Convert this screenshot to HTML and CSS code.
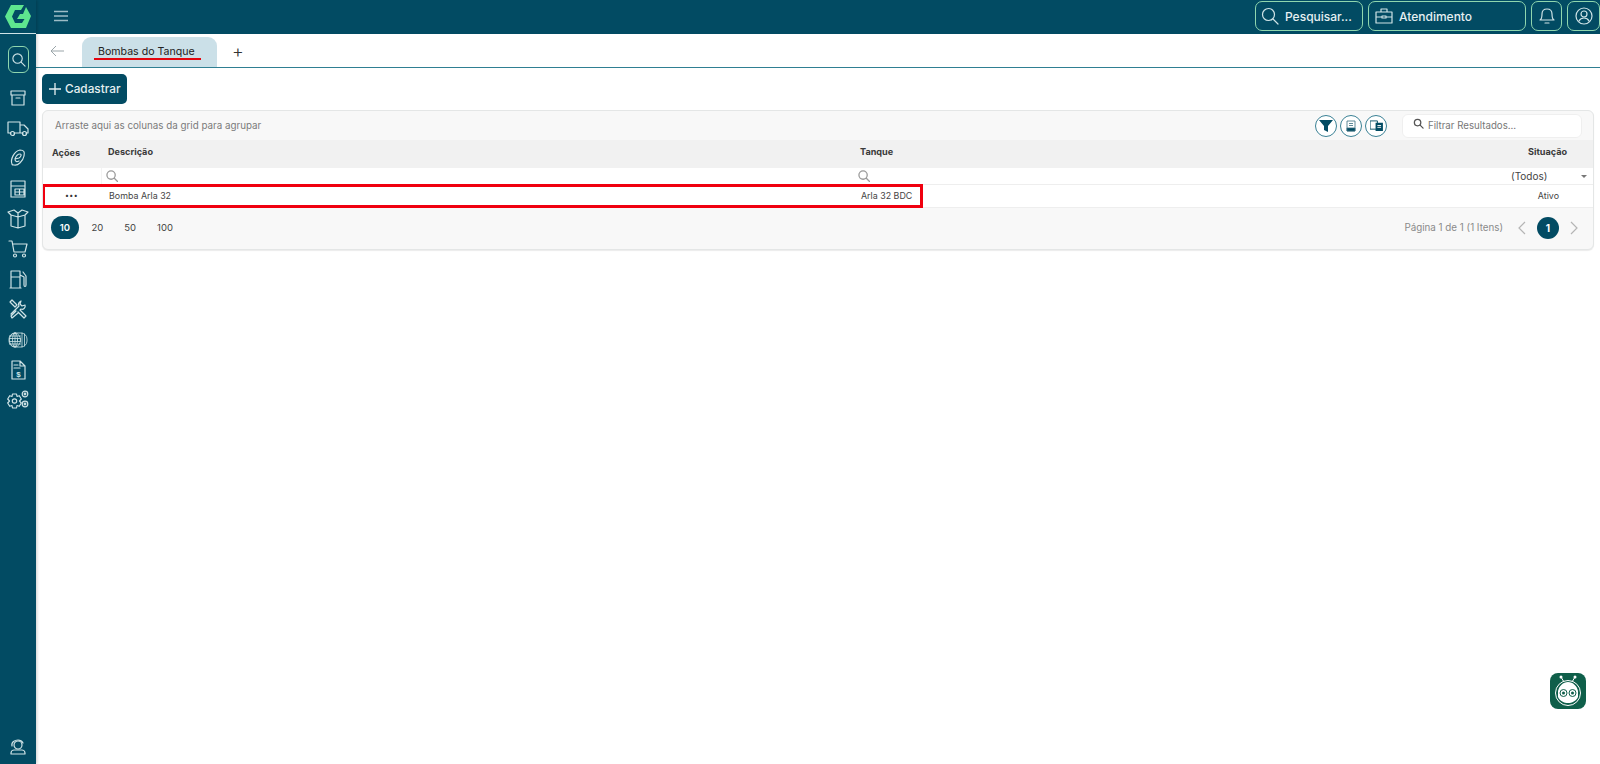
FILE: index.html
```html
<!DOCTYPE html>
<html lang="pt-BR">
<head>
<meta charset="utf-8">
<title>Bombas do Tanque</title>
<link rel="stylesheet" href="styles.css">
</head>
<body>
<div class="app">
  <aside class="sidebar">
    <div class="logo">
      <svg viewBox="5 5 26 23" width="26" height="23"><path d="M11 5 H24 L21 10 H15 L12 16.500 L15 23 H22 L24.500 19 H17 L20 14 H23 L26 7 L31 16 L26 28 H11 L5 16.500 Z" fill="#5ee58f"/></svg>
    </div>
    <div class="side-search">
      <svg viewBox="0 0 16 16" width="15" height="15" class="ic"><circle cx="7" cy="7" r="5"/><path d="M11 11l4 4"/></svg>
    </div>
    <nav class="side-nav">
      <span class="side-item"><svg viewBox="0 0 18 18" width="18" height="18" class="ic"><path d="M2 2h14v4H2zM3 6v10h12V6M7 9h4"/></svg></span>
      <span class="side-item"><svg viewBox="0 0 22 18" width="22" height="18" class="ic"><path d="M1 3h12v11H7M4 14H1V3M13 6h4l4 4v4h-2M16 14h-3"/><circle cx="5.500" cy="14.500" r="2"/><circle cx="17.500" cy="14.500" r="2"/></svg></span>
      <span class="side-item"><svg viewBox="0 0 18 20" width="18" height="20" class="ic"><path d="M3 16c-2-4 2-13 8-14 4 0 5 2 4 6-1 5-6 10-10 9-1 0-2 0-2-1z"/><path d="M6 11c1-3 3-5 5-5 2 0 1 3-1 4l-4 1c0 3 2 3 4 2"/></svg></span>
      <span class="side-item"><svg viewBox="0 0 18 18" width="18" height="18" class="ic"><path d="M2 1h14v16H2zM2 6h14M6 9h9v6H6zM10.500 9v6M6 12h9"/></svg></span>
      <span class="side-item"><svg viewBox="0 0 22 20" width="22" height="20" class="ic"><path d="M4 6v11l7 2 7-2V6M11 8v11M4 6L1 3l6-2 4 3 4-3 6 2-3 3-7 2zM11 4v4"/></svg></span>
      <span class="side-item"><svg viewBox="0 0 20 18" width="20" height="18" class="ic"><path d="M1 1h3l2 11h11l2-8H5"/><circle cx="7" cy="15.500" r="1.500"/><circle cx="16" cy="15.500" r="1.500"/></svg></span>
      <span class="side-item"><svg viewBox="0 0 18 20" width="18" height="20" class="ic"><path d="M2 19V2h9v17M1 19h11M2 8h9M11 6l4 2v8c0 2 2 2 2 0V7l-3-4"/></svg></span>
      <span class="side-item"><svg viewBox="0 0 20 20" width="20" height="20" class="ic"><path d="M2 3l2-2 5 5-2 2zM8 12l-5 5 1 2 6-5M13 2c-2 1-3 3-2 5L3 15M13 2l-1 3 2 2 3-1c1 3-2 5-4 4l-1 1 6 6-2 2-6-6"/></svg></span>
      <span class="side-item"><svg viewBox="0 0 20 16" width="20" height="16" class="ic thin"><rect x="1" y="1" width="18" height="14" rx="6"/><ellipse cx="7" cy="8" rx="5.500" ry="7"/><ellipse cx="7" cy="8" rx="2.500" ry="7"/><path d="M1.500 4h11M1.500 6.500h11M1.500 9.500h11M1.500 12h11M7 1v14M14 1v14M16.500 2v12"/></svg></span>
      <span class="side-item"><svg viewBox="0 0 16 20" width="16" height="20" class="ic"><path d="M2 1h8l5 5v13H2zM10 1v5h5M4 5h4M4 8h6"/><text x="8.500" y="17" class="dollar">$</text></svg></span>
      <span class="side-item"><svg viewBox="0 0 22 20" width="22" height="20" class="ic"><circle cx="7.500" cy="11" r="2.200"/><path d="M5.500 4h4l.5 2.500 2.300-.8 2 3.300-1.800 2 1.800 2-2 3.300-2.300-.8-.5 2.500h-4L5 15.500l-2.300.8-2-3.300 1.800-2-1.800-2 2-3.300 2.300.8z"/><circle cx="18" cy="4" r="2.800"/><circle cx="18" cy="14" r="2.800"/><circle cx="18" cy="4" r=".8"/><circle cx="18" cy="14" r=".8"/></svg></span>
    </nav>
    <div class="side-foot">
      <svg viewBox="0 0 18 16" width="18" height="16" class="ic"><circle cx="9" cy="6" r="4"/><path d="M3 7c-1-4 3-6 6-6 2 0 4 1 5 3M2 15v-1c0-2 2-3 3-3h8c1 0 3 1 3 3v1z"/></svg>
    </div>
  </aside>

  <div class="main">
    <header class="topbar">
      <svg viewBox="0 0 14 12" width="14" height="12" class="menu"><path d="M0 1.500h14M0 6h14M0 10.500h14"/></svg>
      <div class="top-actions">
        <button class="top-btn search-btn">
          <svg viewBox="0 0 18 18" width="18" height="18" class="ic"><circle cx="7.500" cy="7.500" r="6"/><path d="M12 12l5 5"/></svg>
          Pesquisar...
        </button>
        <button class="top-btn service-btn">
          <svg viewBox="0 0 18 16" width="18" height="16" class="ic"><path d="M1 4h16v11H1zM6 4V1h6v3M1 9h6M11 9h6M7 8h4v2H7z"/></svg>
          Atendimento
        </button>
        <button class="top-btn icon-btn">
          <svg viewBox="0 0 16 18" width="16" height="18" class="ic"><path d="M1 13c2-1 2-3 2-6 0-3 2-5 5-5s5 2 5 5c0 3 0 5 2 6zM6 16h4"/></svg>
        </button>
        <button class="top-btn icon-btn user-btn">
          <svg viewBox="0 0 18 18" width="18" height="18" class="ic"><circle cx="9" cy="9" r="8"/><circle cx="9" cy="7" r="3"/><path d="M4 14c1-2 3-3 5-3s4 1 5 3"/></svg>
        </button>
      </div>
    </header>

    <div class="tabs">
      <svg viewBox="0 0 14 12" width="14" height="12" class="back"><path d="M14 6H1M6 1L1 6l5 5"/></svg>
      <div class="tab"><span class="tab-label">Bombas do Tanque</span></div>
      <span class="tab-add">+</span>
    </div>

    <div class="content">
      <button class="primary"><svg viewBox="0 0 12 12" width="12" height="12" class="plus"><path d="M6 0v12M0 6h12"/></svg>Cadastrar</button>

      <section class="grid-card">
        <div class="toolbar">
          <span class="group-hint">Arraste aqui as colunas da grid para agrupar</span>
          <div class="tools">
            <span class="tool"><svg viewBox="0 0 14 14" width="14" height="14"><path d="M0 1h14L9 7v6L5 11V7z" fill="#024b63"/></svg></span>
            <span class="tool"><svg viewBox="0 0 12 12" width="12" height="12" class="tool-line"><path d="M2 1h8v10H2zM4 3.500h4M4 5.500h4"/><path d="M2 8h8v3H2z" fill="#024b63"/></svg></span>
            <span class="tool"><svg viewBox="0 0 14 12" width="13" height="11"><path d="M0 1h8v9H0z" fill="none" stroke="#024b63"/><path d="M6 3h8v9H6z" fill="#024b63"/><path d="M8 6h4M8 8h4" stroke="#fff"/></svg></span>
          </div>
          <div class="filter-input">
            <svg viewBox="0 0 12 12" width="11" height="11" class="find dark"><circle cx="5" cy="5" r="3.500"/><path d="M8 8l3 3"/></svg>
            <span>Filtrar Resultados...</span>
          </div>
        </div>

        <div class="row head">
          <span class="c-actions">Ações</span>
          <span class="c-desc">Descrição</span>
          <span class="c-tank">Tanque</span>
          <span class="c-status">Situação</span>
        </div>

        <div class="row filters">
          <span class="c-actions"></span>
          <span class="c-desc"><svg viewBox="0 0 13 13" width="12" height="12" class="find"><circle cx="5.500" cy="5.500" r="4.500"/><path d="M9 9l3.500 3.500"/></svg></span>
          <span class="c-tank"><svg viewBox="0 0 13 13" width="12" height="12" class="find"><circle cx="5.500" cy="5.500" r="4.500"/><path d="M9 9l3.500 3.500"/></svg></span>
          <span class="c-status"><span class="all">(Todos)</span><i class="caret"></i></span>
        </div>

        <div class="row data">
          <span class="c-actions dots">•••</span>
          <span class="c-desc">Bomba Arla 32</span>
          <span class="c-tank">Arla 32 BDC</span>
          <span class="c-status">Ativo</span>
          <i class="highlight"></i>
        </div>

        <div class="pager">
          <div class="sizes">
            <span class="size on">10</span>
            <span class="size">20</span>
            <span class="size">50</span>
            <span class="size">100</span>
          </div>
          <div class="pages">
            <span class="page-info">Página 1 de 1 (1 Itens)</span>
            <svg viewBox="0 0 8 14" width="8" height="14" class="chev"><path d="M7 1L1 7l6 6"/></svg>
            <span class="page-on">1</span>
            <svg viewBox="0 0 8 14" width="8" height="14" class="chev"><path d="M1 1l6 6-6 6"/></svg>
          </div>
        </div>
      </section>
    </div>
  </div>
</div>

<div class="bot">
  <svg viewBox="0 0 36 36" width="36" height="36">
    <path d="M11 4l3 5M25 4l-3 5" stroke="#fff" stroke-width="1"/>
    <circle cx="11" cy="4" r="1.500" fill="#fff"/><circle cx="25" cy="4" r="1.500" fill="#fff"/>
    <circle cx="18" cy="20" r="12.500" fill="none" stroke="#fff" stroke-width="1"/>
    <path d="M8 18c1-5 5-9 10-9s9 4 10 9v6c-2 4-6 6-10 6s-8-2-10-6z" fill="#fff"/>
    <circle cx="13.500" cy="20" r="3.500" fill="none" stroke="#0f5f4a" stroke-width="1"/>
    <circle cx="22.500" cy="20" r="3.500" fill="none" stroke="#0f5f4a" stroke-width="1"/>
    <circle cx="13.500" cy="20" r="1.500" fill="#0f5f4a"/><circle cx="22.500" cy="20" r="1.500" fill="#0f5f4a"/>
  </svg>
</div>
</body>
</html>
```

FILE: styles.css
```css
* { box-sizing: border-box; }
html, body { margin: 0; height: 100%; overflow: hidden; }
body { font-family: Inter, "Liberation Sans", sans-serif; color: #333; background: #fff; }

.app { display: flex; height: 764px; }

.ic { fill: none; stroke: #cfe3e6; stroke-width: 1.200; stroke-linecap: round; stroke-linejoin: round; }
.ic.thin { stroke-width: .8; }
.dollar { font: 700 8px "Liberation Sans", sans-serif; fill: #cfe3e6; stroke: none; text-anchor: middle; }

.sidebar { width: 36px; flex: none; background: #024b63; display: flex; flex-direction: column; align-items: center; box-shadow: 1px 0 3px rgba(0,0,0,.2); z-index: 1; }
.logo { width: 36px; height: 34px; flex: none; display: flex; align-items: center; justify-content: center; border-bottom: 1px solid #cfe3e6; }
.side-search { width: 21px; height: 27px; margin-top: 12px; border: 1px solid #8fd6ae; border-radius: 6px; display: flex; align-items: center; justify-content: center; }
.side-nav { display: flex; flex-direction: column; margin-top: 10px; }
.side-item { height: 30.200px; display: flex; align-items: center; justify-content: center; }
.side-foot { margin-top: auto; height: 25px; }

.main { flex: 1; min-width: 0; display: flex; flex-direction: column; }

.topbar { height: 34px; background: #024b63; display: flex; align-items: center; padding-left: 18px; }
.menu { fill: none; stroke: #9dbcc6; stroke-width: 1.300; margin-top: -2px; }
.top-actions { margin-left: auto; display: flex; gap: 5px; height: 30px; margin-top: -2px; }
.top-btn { height: 30px; background: none; border: 1px solid #8fd6ae; border-radius: 7px; color: #e6f0f2; font: 500 12px Inter, sans-serif; display: flex; align-items: center; gap: 6px; padding: 0 5px; white-space: nowrap; }
.search-btn { width: 108px; }
.service-btn { width: 158px; padding-left: 6px; }
.icon-btn { width: 31px; justify-content: center; padding: 0; }
.user-btn { width: 33px; }

.tabs { height: 34px; flex: none; display: flex; align-items: flex-end; border-bottom: 1px solid #2f7f92; }
.back { fill: none; stroke: #9aa5a9; stroke-width: 1; align-self: center; margin: 0 0 0 14px; }
.tab { width: 135px; height: 30px; margin-left: 18px; background: #cbe0e8; border-radius: 9px 9px 0 0; font-size: 10.600px; color: #222; padding: 8px 0 0 16px; white-space: nowrap; }
.tab-label { position: relative; display: inline-block; line-height: 14px; }
.tab-label::after { content: ""; position: absolute; left: -4px; right: -6px; top: 13px; height: 2px; background: #e4060f; }
.tab-add { font-size: 18px; font-weight: 300; color: #333; align-self: center; margin: 0 0 0 15px; line-height: 18px; position: relative; top: 1px; }

.content { padding: 6px 6px 0 6px; }

.primary { display: flex; align-items: center; width: 85px; height: 30px; border: 0; border-radius: 5px; background: #024b63; color: #e6f0f2; font: 500 11.800px Inter, sans-serif; padding: 0 0 0 7px; white-space: nowrap; }
.plus { fill: none; stroke: #e6f0f2; stroke-width: 1.300; margin-right: 4px; }

.grid-card { margin-top: 6px; height: 140px; border: 1px solid #e4e6e6; border-radius: 6px; background: #f8f8f8; box-shadow: 0 1px 1px rgba(0,0,0,.08); overflow: hidden; }

.toolbar { height: 29px; display: flex; align-items: center; padding-left: 12px; }
.group-hint { font-size: 9.800px; color: #7b7b7b; }
.tools { margin-left: auto; display: flex; gap: 3px; }
.tool { width: 22px; height: 22px; border: 1.200px solid #3a8195; border-radius: 50%; display: flex; align-items: center; justify-content: center; background: #fff; }
.tool-line { fill: none; stroke: #3a6f80; stroke-width: .8; }
.filter-input { width: 180px; height: 24px; margin: 0 11px 0 15px; border: 1px solid #efefef; border-radius: 6px; background: #fff; display: flex; align-items: center; gap: 4px; padding-left: 10px; font-size: 9.700px; color: #777; }
.filter-input .find { margin-top: -4px; }

.find { fill: none; stroke: #9a9a9a; stroke-width: 1.400; stroke-linecap: round; }
.find.dark { stroke: #555; }

.row { display: grid; grid-template-columns: 58px 752px 1fr 90px; align-items: center; font-size: 9.100px; }
.row > span { display: flex; align-items: center; }
.c-actions { padding-left: 9px; }
.c-desc { padding-left: 7px; }
.c-tank { padding-left: 7px; }
.c-status { justify-content: flex-end; padding-right: 26px; }

.head { height: 28px; background: #f1f1f1; font-weight: 700; color: #3a3a3a; }
.head span { position: relative; top: -3px; }
.head .c-actions { top: -2px; }

.filters { height: 16px; background: #fff; }
.filters .c-desc { height: 16px; border-left: 1px solid #f3f3f3; padding-left: 4px; }
.filters .c-tank { padding-left: 5px; }
.filters .c-status { padding-right: 6px; justify-content: space-between; padding-left: 0; }
.all { font-size: 10px; color: #444; margin-left: 8px; }
.caret { width: 0; height: 0; border-left: 3px solid transparent; border-right: 3px solid transparent; border-top: 3px solid #777; }

.data { height: 24px; padding-bottom: 1px; background: #fff; position: relative; color: #444; font-size: 8.900px; border-top: 1px solid #eee; border-bottom: 1px solid #eee; }
.data .c-desc { padding-left: 8px; }
.data .c-tank { padding-left: 8px; }
.data .c-status { padding-right: 34px; }
.dots { font-size: 7px; letter-spacing: .4px; padding-left: 22px !important; color: #333; }
.highlight { position: absolute; left: -1px; top: -1px; width: 881px; height: 24px; border: 3px solid #f0000f; }

.pager { height: 41px; display: flex; align-items: center; justify-content: space-between; padding: 0 15px 2px 8px; font-size: 9.500px; color: #444; }
.sizes { display: flex; align-items: center; }
.size { padding: 0 10.500px; line-height: 23px; }
.size.on { width: 28px; padding: 0; text-align: center; background: #024b63; color: #fff; border-radius: 12px; font-weight: 600; margin-right: 2px; }
.pages { display: flex; align-items: center; }
.page-info { color: #8a8a8a; margin-right: 15px; font-size: 9.800px; }
.chev { fill: none; stroke: #b5b5b5; stroke-width: 1.200; }
.page-on { width: 22px; height: 22px; margin: 0 11px 0 11px; border-radius: 50%; background: #024b63; color: #fff; font-weight: 700; font-size: 10px; display: flex; align-items: center; justify-content: center; }

.bot { position: fixed; left: 1550px; top: 673px; width: 36px; height: 36px; border-radius: 8px; background: #0f5f4a; }
.bot svg { display: block; }
```
